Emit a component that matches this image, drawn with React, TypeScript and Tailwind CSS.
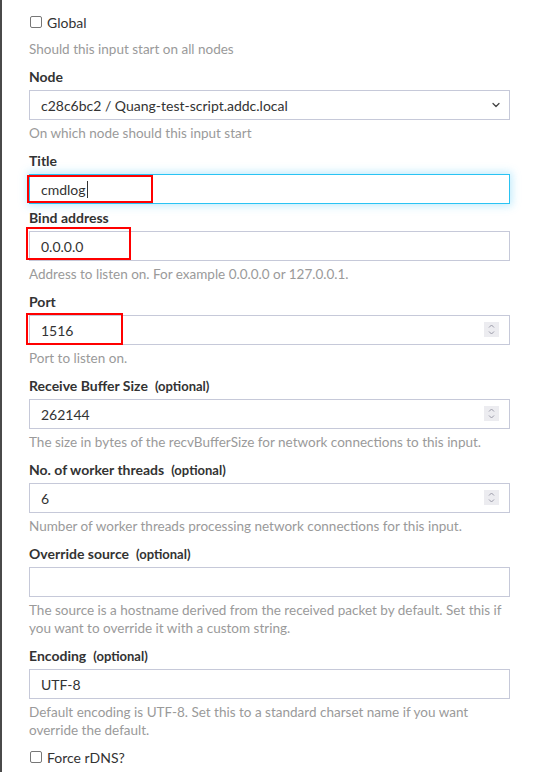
import { ChevronDown } from "lucide-react";

const font = { fontFamily: "Lato, 'Noto Sans', sans-serif" };

function Label({ text, optional }: { text: string; optional?: boolean }) {
    return (
        <div className="h-[20px] leading-[20px] text-[14px] font-bold text-[#333]">
            {text}
            {optional && <span className="ml-[7px] text-[13px]">(optional)</span>}
        </div>
    );
}

function Help({ children }: { children: React.ReactNode }) {
    return <div className="mt-[4px] text-[13.5px] leading-[18px] text-[#9a9a9a]">{children}</div>;
}

function Spinner() {
    return (
        <div className="absolute right-[11px] top-[7px] w-[15px] h-[15px] bg-[#ececf0] flex flex-col items-center justify-center">
            <svg width="9" height="13" viewBox="0 0 9 13" fill="none" stroke="#9a9aa8" strokeWidth="1">
                <path d="M2 4.5 L4.5 2 L7 4.5" />
                <path d="M2 8.5 L4.5 11 L7 8.5" />
            </svg>
        </div>
    );
}

function Box({ value, spin, focus, mark }: { value: string; spin?: boolean; focus?: boolean; mark?: string }) {
    return (
        <div className="relative mt-[3px]">
            <div
                className={
                    focus
                        ? "h-[30px] border border-[#29c3f3] shadow-[0_0_8px_2px_rgba(80,200,250,0.35)] bg-white pl-[11px] flex items-center text-[14px] text-[#333]"
                        : "h-[30px] border border-[#c6c9d9] bg-white pl-[11px] flex items-center text-[14px] text-[#333]"
                }
            >
                {value}
                {focus && <span className="inline-block w-px h-[17px] bg-[#333] ml-px" />}
            </div>
            {spin && <Spinner />}
            {mark && <div className={"absolute border-2 border-[#f00] " + mark} />}
        </div>
    );
}

function Check({ text }: { text: string }) {
    return (
        <div className="flex items-center h-[20px] text-[14px] text-[#333]">
            <span className="w-[12px] h-[12px] border border-[#777] rounded-[2px] bg-white ml-[1px] mr-[5px]" />
            {text}
        </div>
    );
}

export default function App() {
    return (
        <div style={font} className="w-[537px] h-[772px] bg-white border-l-2 border-[#4a4a4a] overflow-hidden">
            <div className="pl-[27px] pr-[27px] pt-[12px]">
                <Check text="Global" />
                <div className="mt-[8px]">
                    <Help>Should this input start on all nodes</Help>
                </div>

                <div className="mt-[9px]">
                    <Label text="Node" />
                    <div className="relative mt-[3px]">
                        <div className="h-[30px] border border-[#c6c9d9] bg-white pl-[11px] flex items-center text-[14px] text-[#333]">
                            c28c6bc2 / Quang-test-script.addc.local
                        </div>
                        <ChevronDown size={12} strokeWidth={2.5} className="absolute right-[8px] top-[9px] text-[#444]" />
                    </div>
                    <Help>On which node should this input start</Help>
                </div>

                <div className="mt-[9px]">
                    <Label text="Title" />
                    <Box value="cmdlog" focus mark="left-[-2px] top-[1px] w-[126px] h-[28px]" />
                </div>

                <div className="mt-[4px]">
                    <Label text="Bind address" />
                    <Box value="0.0.0.0" mark="left-[-3px] top-[-4px] w-[105px] h-[33px]" />
                    <Help>Address to listen on. For example 0.0.0.0 or 127.0.0.1.</Help>
                </div>

                <div className="mt-[9px]">
                    <Label text="Port" />
                    <Box value="1516" spin mark="left-[-3px] top-[-2px] w-[97px] h-[32px]" />
                    <Help>Port to listen on.</Help>
                </div>

                <div className="mt-[9px]">
                    <Label text="Receive Buffer Size" optional />
                    <Box value="262144" spin />
                    <Help>The size in bytes of the recvBufferSize for network connections to this input.</Help>
                </div>

                <div className="mt-[9px]">
                    <Label text="No. of worker threads" optional />
                    <Box value="6" spin />
                    <Help>Number of worker threads processing network connections for this input.</Help>
                </div>

                <div className="mt-[9px]">
                    <Label text="Override source" optional />
                    <Box value="" />
                    <Help>
                        The source is a hostname derived from the received packet by default. Set this if you want to override it
                        with a custom string.
                    </Help>
                </div>

                <div className="mt-[9px]">
                    <Label text="Encoding" optional />
                    <Box value="UTF-8" />
                    <Help>
                        Default encoding is UTF-8. Set this to a standard charset name if you want override the default.
                    </Help>
                </div>

                <div className="mt-[8px]">
                    <Check text="Force rDNS?" />
                </div>
            </div>
        </div>
    );
}
